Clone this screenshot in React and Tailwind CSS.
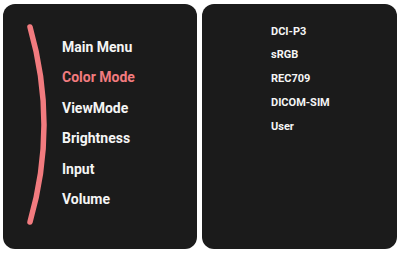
export default function App() {
  const left = ["Main Menu", "Color Mode", "ViewMode", "Brightness", "Input", "Volume"];
  const right = ["DCI-P3", "sRGB", "REC709", "DICOM-SIM", "User"];
  return (
    <div
      className="w-[400px] h-[254px] bg-white flex gap-[5px] px-[3px] pt-[4px]"
      style={{ fontFamily: "Roboto, 'Liberation Sans', sans-serif" }}
    >
      <div className="relative w-[194px] h-[245px] bg-[#1b1b1b] rounded-[12px] pl-[59px] pt-[28px]">
        <svg className="absolute left-0 top-0" width="194" height="245" viewBox="0 0 194 245">
          <path
            d="M27 23 Q55 121 27 218"
            fill="none"
            stroke="#f27b7f"
            strokeWidth="5.5"
            strokeLinecap="round"
          />
        </svg>
        <div className="relative flex flex-col">
          {left.map((t, i) => (
            <div
              key={t}
              className={`h-[30.4px] leading-[30px] text-[14px] font-bold ${i === 1 ? "text-[#f27b7f]" : "text-[#f5f5f5]"}`}
            >
              {t}
            </div>
          ))}
        </div>
      </div>
      <div className="w-[195px] h-[245px] bg-[#1b1b1b] rounded-[12px] pl-[69px] pt-[15.5px]">
        <div className="flex flex-col">
          {right.map((t) => (
            <div key={t} className="h-[23.8px] leading-[24px] text-[11px] font-bold text-[#f5f5f5]">
              {t}
            </div>
          ))}
        </div>
      </div>
    </div>
  );
}
